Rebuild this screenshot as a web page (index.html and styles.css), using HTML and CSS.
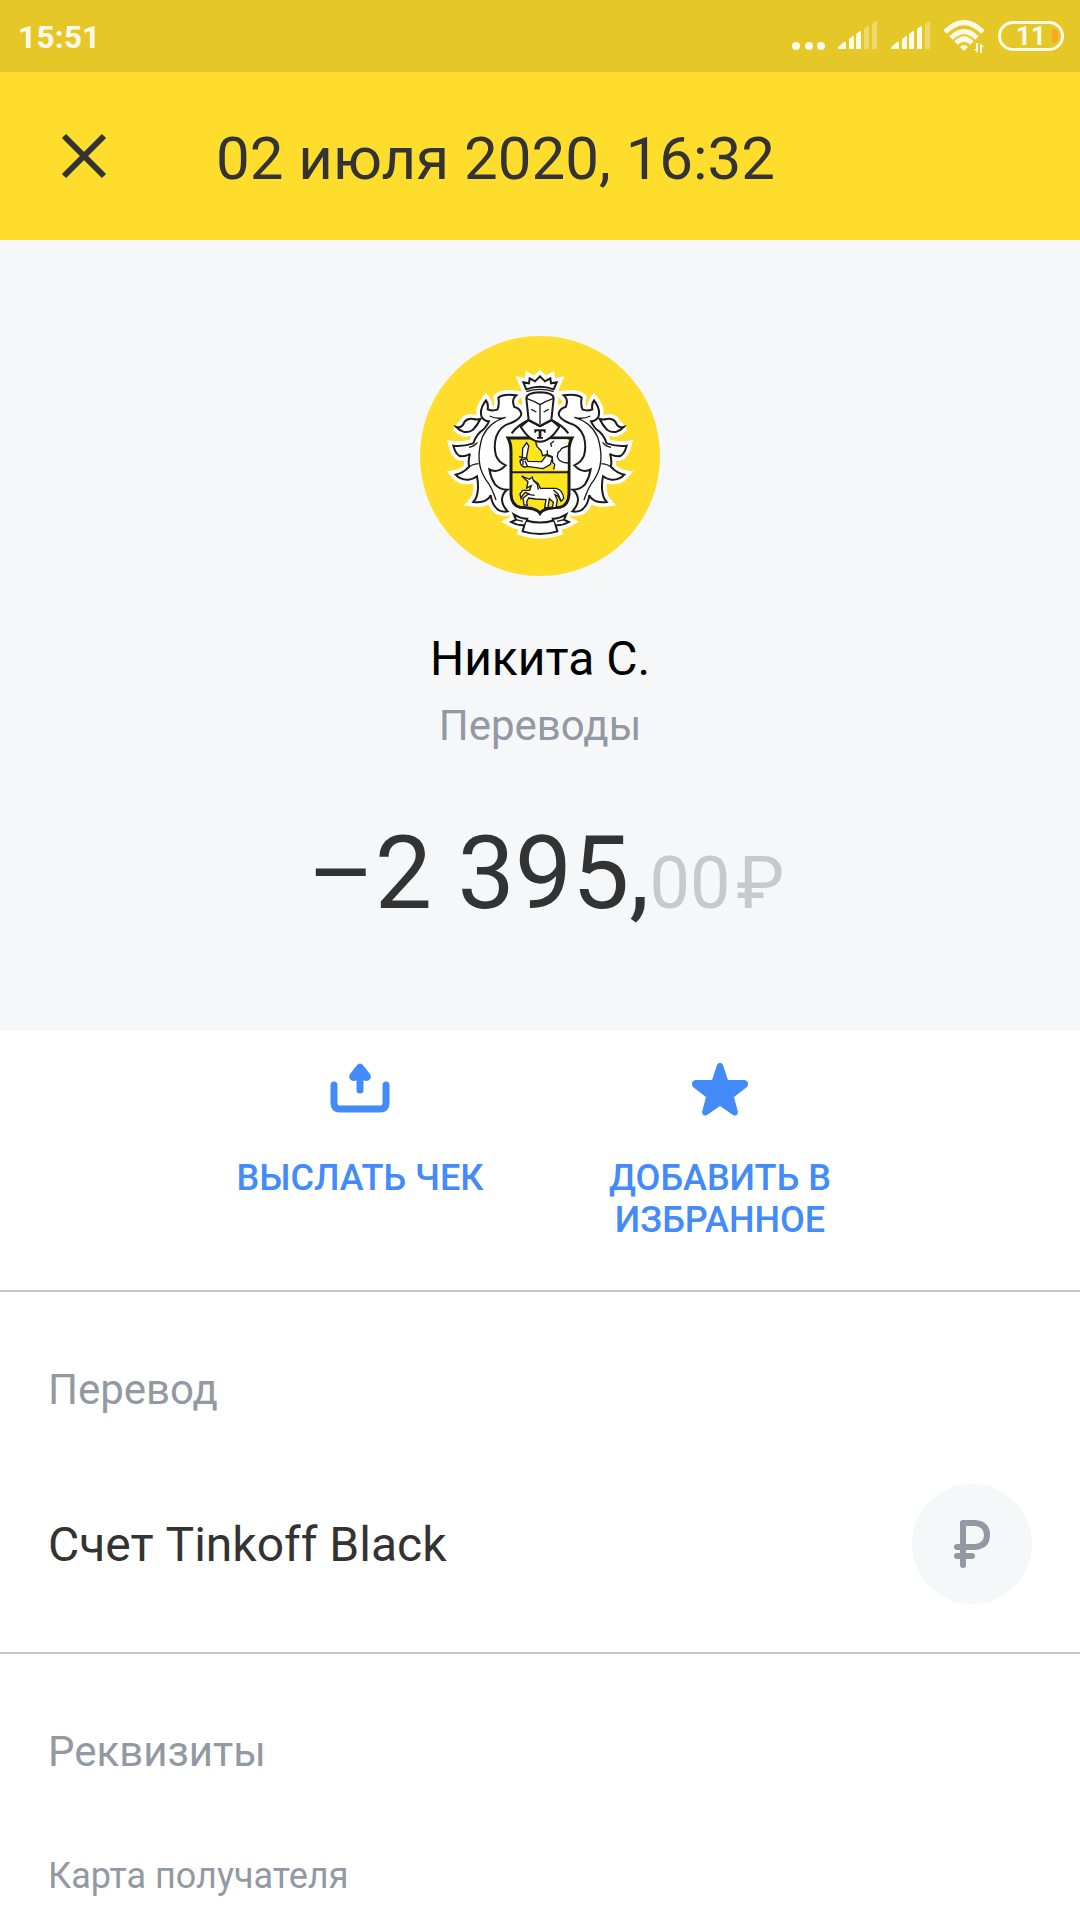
FILE: index.html
```html
<!DOCTYPE html>
<html lang="ru">
<head>
    <meta charset="UTF-8">
    <meta name="viewport" content="width=device-width, initial-scale=1.0">
    <title>Операция</title>
    <link rel="stylesheet" href="styles.css">
</head>
<body>
    <div class="status-bar">
        <span class="status-time">15:51</span>
        <div class="status-icons">
            <svg class="icon-dots" viewBox="0 0 34 32" width="34" height="32">
                <circle cx="4" cy="26" r="4"/>
                <circle cx="17" cy="26" r="4"/>
                <circle cx="29" cy="26" r="4"/>
            </svg>
            <svg class="icon-signal" viewBox="0 0 39 32" width="39" height="32">
                <path d="M0 29V27L6 22Q8 21 8 23V29ZM11 29V19L15 16Q16 16 16 17V29ZM18 29V14L22 11Q23 11 23 12V29Z"/>
                <path class="dim" d="M26 29V9L30 6Q31 6 31 7V29ZM34 29V4L38 1Q39 1 39 2V29Z"/>
            </svg>
            <svg class="icon-signal" viewBox="0 0 39 32" width="39" height="32">
                <path d="M0 29V27L6 22Q8 21 8 23V29ZM11 29V19L15 16Q16 16 16 17V29ZM18 29V14L22 11Q23 11 23 12V29ZM26 29V9L30 6Q31 6 31 7V29Z"/>
                <path class="dim" d="M34 29V4L38 1Q39 1 39 2V29Z"/>
            </svg>
            <svg class="icon-wifi" viewBox="0 0 40 34" width="40" height="34">
                <path class="arc" d="M1 13Q20 -6 39 13M7 19Q20 6 33 19M12 24Q20 16 28 24"/>
                <path d="M20 32L16 28Q20 24 24 28Z"/>
                <path d="M32 24H34V34L30 30H32ZM36 34V24L40 28H38V34Z"/>
            </svg>
            <span class="battery">11</span>
        </div>
    </div>

    <header class="app-bar">
        <button class="close-button" type="button" aria-label="Закрыть">
            <svg viewBox="0 0 48 48" width="48" height="48">
                <path d="M4 4L44 44M44 4L4 44"/>
            </svg>
        </button>
        <h1>02 июля 2020, 16:32</h1>
    </header>

    <main>
        <section class="hero">
            <svg class="crest" viewBox="0 0 720 720" width="240" height="240" role="img" aria-label="Tinkoff">
                <defs>
                    <g id="mantle">
                        <path d="M289 178Q250 172 235 185Q239 208 232 221Q216 226 203 220Q206 203 198 193Q177 220 185 243Q192 255 207 256Q197 277 183 286Q167 300 160 322Q126 333 100 329Q108 360 125 361Q144 360 150 353Q143 377 148 392Q129 412 107 416Q121 432 145 431Q162 429 171 421Q176 445 173 466Q171 486 160 498Q187 502 202 490Q210 484 212 477Q216 510 237 523Q251 529 263 526Q245 507 246 488Q249 470 262 461Q239 461 225 445Q212 425 208 400Q232 414 257 388Q236 379 228 359Q220 331 229 301Q241 269 273 261Q304 247 304 233Q300 217 283 213Q273 191 289 178Z"/>
                        <path d="M109 273Q126 278 134 257Q143 246 160 249Q171 252 181 249Q172 269 158 282Q144 291 130 287Q117 282 109 273Z"/>
                    </g>
                    <path id="veins" d="M257 244Q208 257 187 303Q163 379 197 430Q216 454 228 492M209 240Q232 251 257 244M147 334Q164 331 172 319M138 399Q154 385 176 383"/>
                    <path id="crown" d="M319 160L310 139L327 142L329 127L345 136L360 121L375 136L391 127L393 142L410 139L401 160Q360 145 319 160Z"/>
                    <path id="helmet" d="M319 187Q320 170 360 169Q400 170 401 187L394 252L360 270L326 252Z"/>
                    <path id="shoulders" d="M275 292Q291 269 326 252L360 270L394 252Q429 269 445 292"/>
                    <path id="shield" d="M264 306H456Q447 322 447 345V475Q445 508 420 514Q393 515 377 520Q364 525 360 532Q356 525 343 520Q327 515 300 514Q275 508 273 475V345Q273 322 264 306Z"/>
                    <path id="ribbon" d="M281 535Q302 548 322 548L321 554Q360 565 399 554L398 548Q418 548 439 535L432 551L447 558Q428 569 407 568L412 586Q360 602 308 586L313 568Q292 569 273 558L288 551Z"/>
                </defs>
                <circle class="disc" cx="360" cy="360" r="360"/>
                <g class="halo">
                    <use href="#mantle"/>
                    <use href="#mantle" transform="matrix(-1 0 0 1 720 0)"/>
                    <use href="#crown"/>
                    <use href="#helmet"/>
                    <use href="#shield"/>
                    <use href="#ribbon"/>
                    <path d="M300 220H420L500 300L458 515L400 540H320L262 515L220 300Z"/>
                </g>
                <g class="line">
                    <use href="#mantle"/>
                    <use href="#mantle" transform="matrix(-1 0 0 1 720 0)"/>
                    <use href="#crown"/>
                    <use href="#ribbon"/>
                </g>
                <g class="fine">
                    <use href="#veins"/>
                    <use href="#veins" transform="matrix(-1 0 0 1 720 0)"/>
                    <path d="M322 548L313 568M399 548L407 568M288 551L309 556M432 551L411 556M319 167Q360 153 401 167"/>
                </g>
                <use class="shield" href="#shield"/>
                <path class="body" d="M353 310H443V403H402L399 385L388 380L392 367L379 370L382 356L367 358L362 344L347 337L356 323Z"/>
                <path class="detail" d="M347 318L351 332L363 344L368 359L382 355L382 343M382 356L397 362L398 380L404 385L401 401M402 315L392 323L395 332M444 330L425 337L419 346L414 349L412 363L418 373L430 379L444 381"/>
                <path class="figure" d="M307 366L308 337L320 320L326 330L319 367L324 376L365 377L379 358L397 365L391 386L369 398L322 391Q309 397 302 384L300 375Z"/>
                <path class="detail" d="M297 362L322 367M301 374L320 368M315 374L322 391M309 374V387"/>
                <path class="bar" d="M274 409H446"/>
                <path class="figure" d="M324 437L305 420L328 430L337 423L340 433L354 442L361 457L408 457Q428 461 431 487L423 496L415 481L405 476L412 492L408 514L397 516L400 499L388 488L384 514L374 516L378 491L346 489L326 486L320 497L322 508L312 507L309 487L326 473L316 469L307 479L303 488L300 474L308 463L329 463L334 449L320 456Z"/>
                <path class="detail" d="M340 433L352 446L355 461M400 462L414 474L423 494M325 475L344 478"/>
                <!-- collar lies over the top edge of the shield -->
                <g class="line">
                    <path d="M302 272Q330 317 360 317Q390 317 418 272L394 252L360 270L326 252Z"/>
                    <use class="open" href="#shoulders"/>
                    <use href="#helmet"/>
                </g>
                <path class="detail" d="M319 187Q340 194 360 206Q380 194 401 187M360 206V265M334 220L349 228M386 220L371 228"/>
                <path class="letter" d="M343 280H377V290H373L370 286H364V303H369V308H351V303H356V286H350L347 290H343Z"/>
            </svg>
            <h2 class="recipient">Никита С.</h2>
            <p class="category">Переводы</p>
            <p class="amount">–2 395,<span class="cents">00</span><span class="currency">₽</span></p>
        </section>

        <div class="actions">
            <button class="action" type="button">
                <svg viewBox="0 0 60 60" width="60" height="60">
                    <path class="tray" d="M4 26V44Q4 50 10 50H50Q56 50 56 44V26"/>
                    <path class="tray" d="M30 18V31"/>
                    <path d="M27 6Q30 3 33 6L40 15Q42 19 39 21Q37 23 33 21H27Q23 23 21 21Q18 19 20 15Z"/>
                </svg>
                <span>Выслать чек</span>
            </button>
            <button class="action" type="button">
                <svg viewBox="0 0 60 60" width="60" height="60">
                    <path d="M27 6Q30 1 33 6L38 21H55Q60 23 57 28L44 38L48 53Q47 58 43 56L30 47L17 56Q13 58 12 53L16 38L3 28Q0 23 5 21H22Z"/>
                </svg>
                <span>Добавить в избранное</span>
            </button>
        </div>

        <section class="details">
            <h3>Перевод</h3>
            <div class="account">
                <span>Счет Tinkoff Black</span>
                <span class="account-icon">
                    <svg viewBox="0 0 48 60" width="48" height="60">
                        <path d="M15 51V9H27Q39 10 39 21Q39 32 27 33H9M9 42H24"/>
                    </svg>
                </span>
            </div>
        </section>

        <section class="details">
            <h3>Реквизиты</h3>
            <p class="field-label">Карта получателя</p>
        </section>
    </main>
</body>
</html>
```

FILE: styles.css
```css
* {
    box-sizing: border-box;
}

body {
    margin: 0;
    font-family: Roboto, "Noto Sans", sans-serif;
    background: #fff;
    color: #333;
}

h1, h2, h3, p {
    margin: 0;
    font-weight: 400;
}

button {
    padding: 0;
    border: none;
    background: none;
    font-family: inherit;
    cursor: pointer;
}

svg {
    display: block;
}

.status-bar {
    display: flex;
    align-items: center;
    justify-content: space-between;
    height: 72px;
    padding: 0 16px 0 18px;
    background: #e6c728;
    color: #fffaea;
}

.status-time {
    padding-top: 2px;
    font-size: 32px;
    font-weight: 700;
}

.status-icons {
    display: flex;
    align-items: center;
    gap: 14px;
    fill: #fffaea;
}

.icon-dots {
    margin-right: -2px;
}

.status-icons .dim {
    opacity: 0.35;
}

.icon-wifi .arc {
    fill: none;
    stroke: #fffaea;
    stroke-width: 5;
}

.battery {
    position: relative;
    width: 66px;
    height: 30px;
    border: 3px solid #fffaea;
    border-radius: 15px;
    font-size: 26px;
    font-weight: 700;
    line-height: 24px;
    text-align: center;
}

.battery::after {
    content: "";
    position: absolute;
    top: 5px;
    right: 3px;
    width: 6px;
    height: 14px;
    border-radius: 2px 6px 6px 2px;
    background: #f9a825;
}

.app-bar {
    display: flex;
    align-items: center;
    gap: 108px;
    height: 168px;
    padding: 0 60px;
    background: #ffdd2d;
}

.close-button svg {
    fill: none;
    stroke: #333;
    stroke-width: 6;
}

.app-bar h1 {
    padding-top: 6px;
    font-size: 60px;
    line-height: 70px;
}

.hero {
    display: flex;
    flex-direction: column;
    align-items: center;
    padding: 96px 48px;
    background: #f6f7f9;
}

.crest .disc {
    fill: #ffdd2d;
}

.crest .halo {
    fill: #fff;
    stroke: #fff;
    stroke-width: 28;
    stroke-linejoin: miter;
    stroke-miterlimit: 3;
}

.crest .line {
    fill: #fff;
    stroke: #1c1a1b;
    stroke-width: 6;
}

.crest .open {
    fill: none;
}

.crest .fine,
.crest .detail {
    fill: none;
    stroke: #1c1a1b;
    stroke-width: 4;
}

.crest .shield {
    fill: #fae61a;
    stroke: #1c1a1b;
    stroke-width: 9;
}

.crest .body {
    fill: #fff;
}

.crest .figure {
    fill: #fff;
    stroke: #1c1a1b;
    stroke-width: 4;
}

.crest .bar {
    stroke: #1c1a1b;
    stroke-width: 6;
}

.crest .letter {
    fill: #1c1a1b;
}

.recipient {
    margin-top: 55px;
    font-size: 48px;
    line-height: 56px;
    color: #000;
}

.category {
    margin-top: 14px;
    font-size: 42px;
    line-height: 50px;
    color: #9299a2;
}

.amount {
    margin-top: 60px;
    padding-left: 12px;
    font-size: 102px;
    line-height: 124px;
}

.cents,
.currency {
    font-size: 72px;
    line-height: 84px;
    color: #c7c9cc;
}

.currency {
    margin-left: 6px;
}

.actions {
    display: flex;
    justify-content: center;
    gap: 110px;
    padding: 28px 48px 49px;
    border-bottom: 2px solid #c8c7cc;
}

.action {
    display: flex;
    flex-direction: column;
    align-items: center;
    gap: 38px;
    width: 250px;
    font-size: 36px;
    font-weight: 500;
    line-height: 42px;
    text-transform: uppercase;
    color: #428bf9;
    fill: #428bf9;
}

.action .tray {
    fill: none;
    stroke: #428bf9;
    stroke-width: 7;
    stroke-linecap: round;
}

.details {
    padding: 73px 48px 0;
}

.details + .details {
    padding-bottom: 22px;
    border-top: 2px solid #c8c7cc;
}

.details h3 {
    font-size: 42px;
    line-height: 50px;
    color: #9299a2;
}

.account {
    display: flex;
    align-items: center;
    justify-content: space-between;
    padding: 69px 0 48px;
    font-size: 48px;
}

.account-icon {
    display: flex;
    align-items: center;
    justify-content: center;
    width: 120px;
    height: 120px;
    border-radius: 50%;
    background: #f6f7f9;
}

.account-icon svg {
    fill: none;
    stroke: #9299a2;
    stroke-width: 6;
    stroke-linecap: round;
    stroke-linejoin: round;
}

.field-label {
    margin-top: 78px;
    font-size: 36px;
    line-height: 42px;
    color: #9299a2;
}
```
